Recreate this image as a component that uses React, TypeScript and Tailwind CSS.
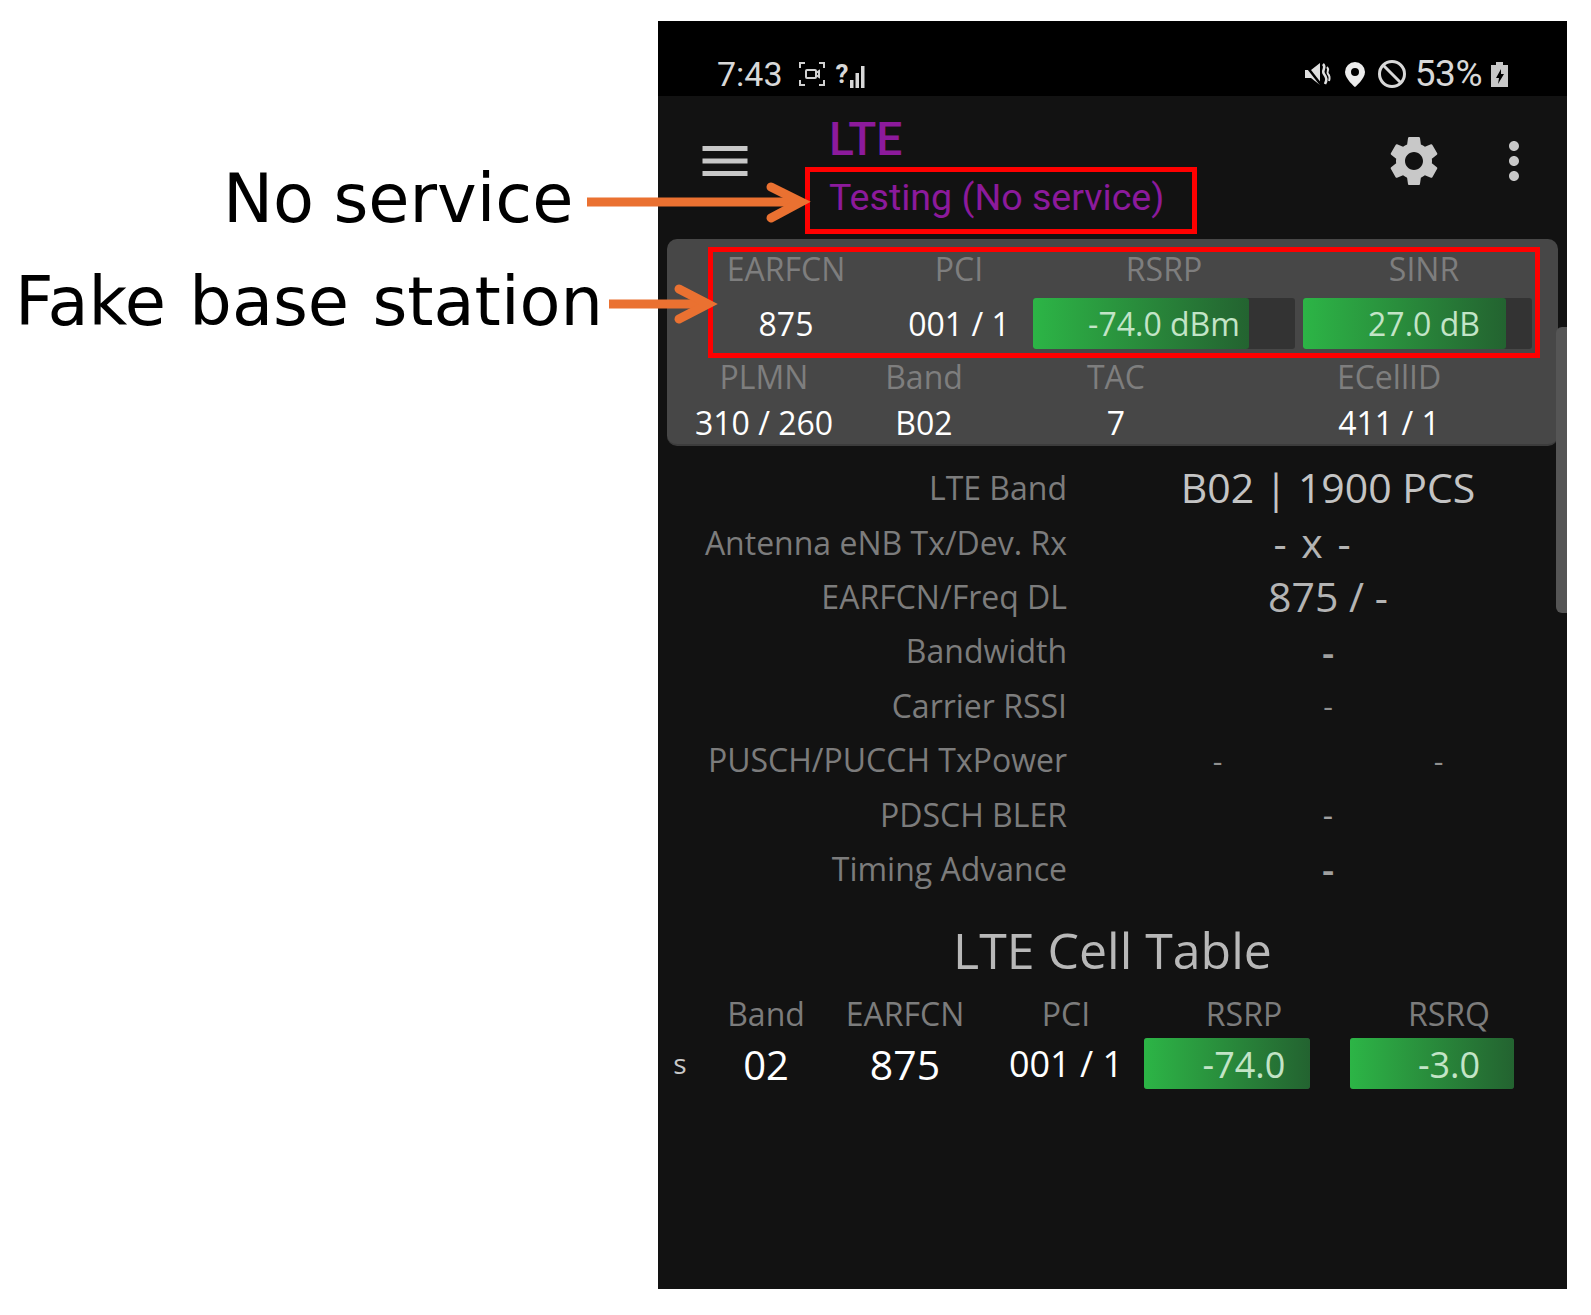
import React from "react";
import { MdMenu, MdSettings, MdMoreVert } from "react-icons/md";

const sans = "font-['Open_Sans',sans-serif]";

const infoRows: [string, React.ReactNode, string][] = [
  ["LTE Band", "B02 | 1900 PCS", "text-[41px] text-[#c4c4c4]"],
  ["Antenna eNB Tx/Dev. Rx", <span className="mr-[32px] [word-spacing:4px]">- x -</span>, "text-[41px] text-[#b4b4b4]"],
  ["EARFCN/Freq DL", "875 / -", "text-[41px] text-[#b4b4b4]"],
  ["Bandwidth", "-", "text-[38px] font-semibold text-[#a0a0a0]"],
  ["Carrier RSSI", "-", "text-[30px] text-[#909090]"],
  ["PUSCH/PUCCH TxPower", "", ""],
  ["PDSCH BLER", "-", "text-[32px] text-[#a0a0a0]"],
  ["Timing Advance", "-", "text-[38px] font-semibold text-[#a0a0a0]"],
];

function Bar({ w, fill, children, textClass = "text-[32px]" }: { w: string; fill: string; children: React.ReactNode; textClass?: string }) {
  return (
    <div className={`relative h-[51px] rounded-[3px] bg-[#333333] ${w}`}>
      <div className={`h-full rounded-[3px] bg-gradient-to-r from-[#2cb546] to-[#236330] ${fill}`} />
      <div className={`absolute inset-0 flex items-center justify-center text-[#c3e4c7] ${textClass}`}>{children}</div>
    </div>
  );
}

export default function App() {
  return (
    <div className={`relative flex h-[1315px] w-[1591px] overflow-hidden bg-white ${sans}`}>
      {/* annotation labels */}
      <div className="w-[658px] shrink-0 pt-[160px] font-['DejaVu_Sans',sans-serif] text-[67px] leading-[78px] text-black">
        <div className="ml-[223px] whitespace-nowrap [word-spacing:-2px]">No service</div>
        <div className="ml-[15px] mt-[25px] whitespace-nowrap [word-spacing:2px]">Fake base station</div>
      </div>

      {/* phone */}
      <div className="mt-[21px] flex h-[1268px] w-[909px] shrink-0 flex-col bg-[#121212]">
        {/* status bar */}
        <div className="flex h-[75px] shrink-0 items-center justify-between bg-black pl-[59px] pr-[58px] pt-[31px] font-['Roboto',sans-serif] text-[#d8d8d8]">
          <div className="flex items-center">
            <span className="text-[34px]">7:43</span>
            <svg className="ml-[15px]" width="28" height="28" viewBox="0 0 28 28" fill="none" stroke="#d0d0d0" strokeWidth="2">
              <path d="M2 8V3h5M21 3h5v5M26 20v5h-5M7 25H2v-5" />
              <rect x="8" y="10" width="10" height="8" rx="1" />
              <path d="M18 13l3-2v6l-3-2" />
            </svg>
            <span className="ml-[10px] text-[26px] font-bold leading-[30px]">?</span>
            <svg className="mt-[2px]" width="16" height="28" viewBox="0 0 16 28" fill="#d8d8d8">
              <rect x="1" y="19" width="3.5" height="8" />
              <rect x="6.5" y="12" width="3.5" height="15" />
              <rect x="12" y="5" width="3.5" height="22" />
            </svg>
          </div>
          <div className="flex items-center">
            <svg width="28" height="30" viewBox="0 0 28 30" fill="#e0e0e0">
              <path d="M1 11h6l9-7v22l-9-7H1z" />
              <path d="M0 4l18 23" stroke="#000" strokeWidth="2.5" />
              <path d="M19 5c4 4-2 6 1 10s3 6 1 10" stroke="#e0e0e0" strokeWidth="2.5" fill="none" />
              <path d="M23 8c3 3-1 5 1 7s2 4 1 7" stroke="#e0e0e0" strokeWidth="2" fill="none" />
            </svg>
            <svg className="ml-[11px]" width="24" height="28" viewBox="0 0 24 28">
              <path fillRule="evenodd" fill="#ececec" d="M12 2a10 10 0 0 0-10 10c0 7 10 15 10 15s10-8 10-15A10 10 0 0 0 12 2zm0 6a4 4 0 1 1 0 8 4 4 0 0 1 0-8z" />
            </svg>
            <svg className="ml-[10px]" width="30" height="30" viewBox="0 0 30 30" fill="none" stroke="#d8d8d8" strokeWidth="3">
              <circle cx="15" cy="15" r="12.5" />
              <path d="M6 6l18 18" />
            </svg>
            <span className="ml-[8px] text-[37px] tracking-[-0.5px]">53%</span>
            <svg className="ml-[8px]" width="19" height="30" viewBox="0 0 19 30">
              <path d="M6 3h7v3h5v22H1V6h5z" fill="#c8c8c8" />
              <path d="M11 10l-5 9h3l-1 6 6-10h-3z" fill="#000" />
            </svg>
          </div>
        </div>

        {/* toolbar */}
        <div className="flex h-[143px] shrink-0 items-start pl-[37px] pr-[23px]">
          <MdMenu className="mt-[35px]" size={60} color="#c8c8c8" />
          <div className="ml-[74px] mt-[15px] flex flex-col font-['Roboto',sans-serif] leading-[57px] text-[#8c1a9c]">
            <span className="text-[46px] font-medium">LTE</span>
            <span className="mt-[1px] text-[37.6px]">Testing (No service)</span>
          </div>
          <MdSettings className="ml-auto mt-[35px]" size={60} color="#c8c8c8" />
          <MdMoreVert className="ml-[40px] mt-[35px]" size={60} color="#c8c8c8" />
        </div>

        {/* serving cell card */}
        <div className="mx-[9px] h-[207px] shrink-0 rounded-[10px] border-b-2 border-[#3c3c3c] bg-[#474747] pt-[10px] text-[32px]">
          <div className="flex h-[40px] items-center text-center leading-[40px] text-[#7e7e7e]">
            <div className="ml-[49px] w-[140px]">EARFCN</div>
            <div className="ml-[30px] w-[146px]">PCI</div>
            <div className="ml-[1px] w-[262px]">RSRP</div>
            <div className="ml-[8px] w-[229px] pl-[13px]">SINR</div>
          </div>
          <div className="mt-[9px] flex h-[51px] items-center text-center text-white">
            <div className="ml-[49px] w-[140px]">875</div>
            <div className="ml-[30px] w-[146px]">001 / 1</div>
            <Bar w="ml-[1px] w-[262px]" fill="w-[216px]">-74.0 dBm</Bar>
            <Bar w="ml-[8px] w-[229px]" fill="w-[203px]" textClass="pl-[13px] text-[32px]">27.0 dB</Bar>
          </div>
          <div className="mt-[8px] flex h-[40px] items-center text-center leading-[40px] text-[#7e7e7e]">
            <div className="ml-[17px] w-[160px]">PLMN</div>
            <div className="ml-[20px] w-[120px]">Band</div>
            <div className="ml-[72px] w-[120px]">TAC</div>
            <div className="ml-[113px] w-[200px]">ECellID</div>
          </div>
          <div className="mt-[6px] flex h-[40px] items-center text-center leading-[40px] text-white">
            <div className="ml-[17px] w-[160px]">310 / 260</div>
            <div className="ml-[20px] w-[120px]">B02</div>
            <div className="ml-[72px] w-[120px]">7</div>
            <div className="ml-[113px] w-[200px]">411 / 1</div>
          </div>
        </div>

        {/* info rows */}
        <div className="mt-[15px] flex shrink-0 flex-col">
          {infoRows.map(([label, value, cls]) => (
            <div key={label} className="flex h-[54.4px] items-center">
              <div className="w-[409px] whitespace-nowrap text-right text-[32px] text-[#7c7c7c]">{label}</div>
              <div className={`ml-[22px] flex w-[478px] justify-center ${cls}`}>
                {label.startsWith("PUSCH") ? (
                  <>
                    <span className="w-[221px] text-center text-[30px] text-[#909090]">-</span>
                    <span className="w-[221px] text-center text-[30px] text-[#909090]">-</span>
                  </>
                ) : (
                  value
                )}
              </div>
            </div>
          ))}
        </div>

        {/* cell table */}
        <div className="mt-[19px] h-[70px] shrink-0 text-center text-[50px] leading-[70px] text-[#b8b8b8]">LTE Cell Table</div>
        <div className="mt-[9px] flex h-[40px] shrink-0 items-center text-center text-[32px] leading-[40px] text-[#7c7c7c]">
          <div className="ml-[68px] w-[80px]">Band</div>
          <div className="ml-[34px] w-[130px]">EARFCN</div>
          <div className="ml-[26px] w-[140px]">PCI</div>
          <div className="ml-[8px] w-[166px] pl-[34px]">RSRP</div>
          <div className="ml-[40px] w-[164px] pl-[34px]">RSRQ</div>
        </div>
        <div className="mt-[4px] flex h-[50px] shrink-0 items-center text-center text-white">
          <div className="ml-[7px] w-[30px] text-[28px] text-[#c8c8c8]">s</div>
          <div className="ml-[31px] mt-[3px] w-[80px] text-[40px]">02</div>
          <div className="ml-[34px] mt-[3px] w-[130px] text-[41px]">875</div>
          <div className="ml-[26px] mt-[2px] w-[140px] text-[36px]">001 / 1</div>
          <Bar w="ml-[8px] w-[166px]" fill="w-full" textClass="pl-[34px] pt-[3px] text-[36px]">-74.0</Bar>
          <Bar w="ml-[40px] w-[164px]" fill="w-full" textClass="pl-[34px] pt-[3px] text-[36px]">-3.0</Bar>
        </div>
      </div>

      {/* scrollbar */}
      <div className="absolute left-[1556px] top-[327px] h-[286px] w-[11px] rounded-l-[6px] bg-[#555555]" />

      {/* red highlight boxes */}
      <div className="absolute left-[805px] top-[167px] h-[67px] w-[392px] border-[5px] border-[#ff0000]" />
      <div className="absolute left-[708px] top-[247px] h-[111px] w-[832px] border-[5px] border-[#ff0000]" />

      {/* arrows */}
      <svg className="absolute left-0 top-0" width="1591" height="400" fill="none" stroke="#ea7131" strokeWidth="9">
        <path d="M587 202H798" />
        <path d="M771 187L801 202L771 218" strokeLinecap="round" strokeLinejoin="miter" />
        <path d="M609 304H704" />
        <path d="M679 289L708 304L679 319" strokeLinecap="round" strokeLinejoin="miter" />
      </svg>
    </div>
  );
}
